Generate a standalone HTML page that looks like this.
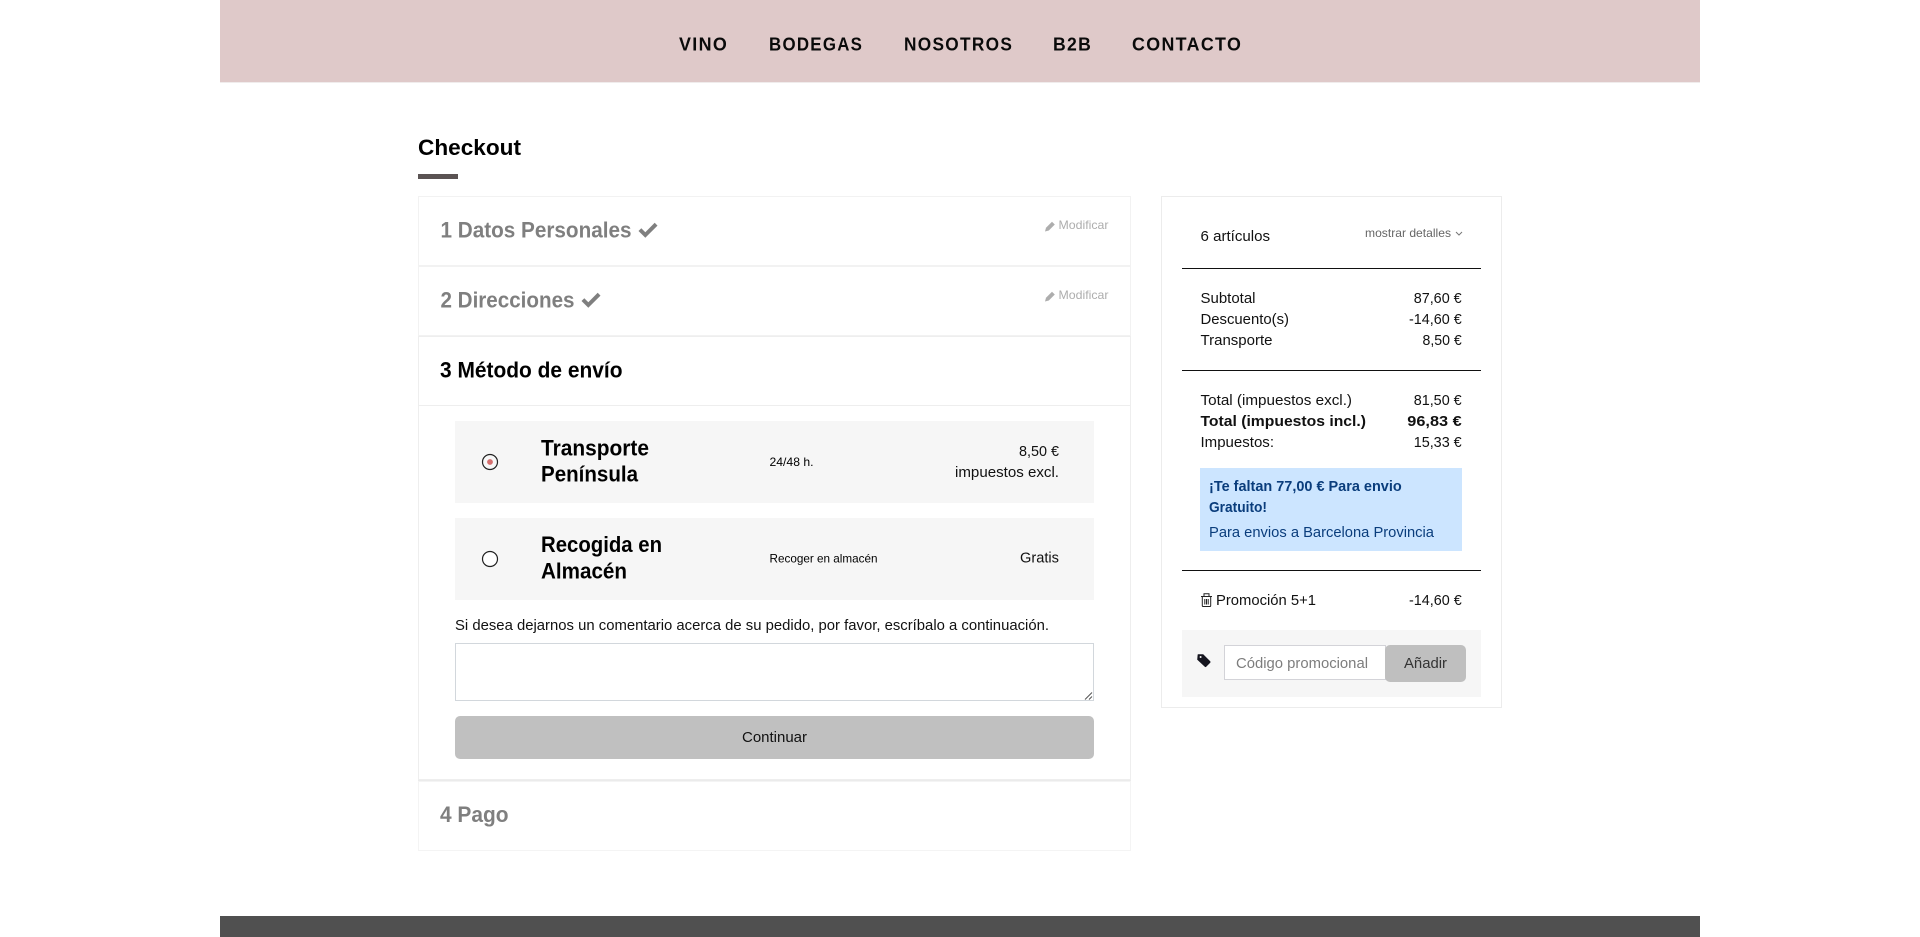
<!DOCTYPE html>
<html lang="es">
<head>
<meta charset="utf-8">
<title>Checkout</title>
<style>
html,body{margin:0;padding:0;background:#fff;width:1920px;height:937px;overflow:hidden}
svg{display:block}
text{font-family:"Liberation Sans",Arial,sans-serif;fill:#000;font-size:15px}
.b{font-weight:700}
.nav{font-size:18.5px;font-weight:700;fill:#0a0a0a;letter-spacing:1.4px}
.h{font-size:22px;font-weight:700}
.g{fill:#7f7f7f}
.m{font-size:12px;fill:#adadad}
.s{font-size:12px}
.t{font-size:15px;fill:#111}
.bl{fill:#0a3d7c;font-size:15px}
</style>
</head>
<body>
<svg width="1920" height="937" viewBox="0 0 1920 937" xmlns="http://www.w3.org/2000/svg">
<!-- header -->
<rect x="220" y="0" width="1480" height="82" fill="#dfc9c9"/>
<rect x="220" y="82" width="1480" height="1" fill="#f0ecec"/>
<text class="nav" x="679" y="50.5" textLength="49.2" lengthAdjust="spacingAndGlyphs">VINO</text>
<text class="nav" x="769" y="50.5" textLength="94.2" lengthAdjust="spacingAndGlyphs">BODEGAS</text>
<text class="nav" x="904" y="50.5" textLength="109.2" lengthAdjust="spacingAndGlyphs">NOSOTROS</text>
<text class="nav" x="1053" y="50.5" textLength="39.2" lengthAdjust="spacingAndGlyphs">B2B</text>
<text class="nav" x="1132" y="50.5" textLength="110.2" lengthAdjust="spacingAndGlyphs">CONTACTO</text>

<!-- title -->
<text class="h" x="418" y="155" textLength="103" lengthAdjust="spacingAndGlyphs">Checkout</text>
<rect x="418" y="174" width="40" height="5" fill="#5a5353"/>

<!-- step boxes -->
<rect x="418.5" y="196.5" width="712" height="69" fill="#fff" stroke="#f2f2f2"/>
<rect x="418.5" y="266.5" width="712" height="69" fill="#fff" stroke="#f2f2f2"/>
<rect x="418.5" y="336.5" width="712" height="443" fill="#fff" stroke="#eeeeee"/>
<rect x="419" y="405" width="711" height="1" fill="#eeeeee"/>
<rect x="418.5" y="781.5" width="712" height="69" fill="#fff" stroke="#f4f4f4"/>
<rect x="418" y="780" width="713" height="1" fill="#ebebeb"/>

<text class="h g" x="440.5" y="237.5" textLength="191" lengthAdjust="spacingAndGlyphs">1 Datos Personales</text>
<path d="M638.5 231l2.8-2.8 4 4 9.4-9.4 2.8 2.8-12.2 12.2z" fill="#7f7f7f"/>
<path d="M1045 231.5l1-3.8 6-6 2.8 2.8-6 6z" fill="#adadad"/>
<text class="m" x="1058.5" y="229" textLength="50" lengthAdjust="spacingAndGlyphs">Modificar</text>

<text class="h g" x="440.5" y="307.5" textLength="134" lengthAdjust="spacingAndGlyphs">2 Direcciones</text>
<path d="M581.5 301l2.8-2.8 4 4 9.4-9.4 2.8 2.8-12.2 12.2z" fill="#7f7f7f"/>
<path d="M1045 301.5l1-3.8 6-6 2.8 2.8-6 6z" fill="#adadad"/>
<text class="m" x="1058.5" y="299" textLength="50" lengthAdjust="spacingAndGlyphs">Modificar</text>

<text class="h" x="440" y="377.5" textLength="182.5" lengthAdjust="spacingAndGlyphs">3 Método de envío</text>

<!-- shipping rows -->
<rect x="455" y="421" width="639" height="82" fill="#f6f6f6"/>
<rect x="455" y="518" width="639" height="82" fill="#f6f6f6"/>
<circle cx="490" cy="462" r="7.5" fill="#f8f8f8" stroke="#222" stroke-width="1.2"/>
<circle cx="490" cy="462" r="2.9" fill="#d66f6f"/>
<circle cx="490" cy="559" r="7.5" fill="#fff" stroke="#222" stroke-width="1.2"/>

<text class="h" x="541" y="455.5" textLength="108" lengthAdjust="spacingAndGlyphs">Transporte</text>
<text class="h" x="541" y="481.5" textLength="97" lengthAdjust="spacingAndGlyphs">Península</text>
<text class="h" x="541" y="552" textLength="121" lengthAdjust="spacingAndGlyphs">Recogida en</text>
<text class="h" x="541" y="578.5" textLength="86" lengthAdjust="spacingAndGlyphs">Almacén</text>
<text class="s" x="769.5" y="466" textLength="44" lengthAdjust="spacingAndGlyphs">24/48 h.</text>
<text class="s" x="769.5" y="562.5" textLength="108" lengthAdjust="spacingAndGlyphs">Recoger en almacén</text>
<text class="t" x="1019" y="456" textLength="40" lengthAdjust="spacingAndGlyphs">8,50 €</text>
<text class="t" x="955" y="477" textLength="104" lengthAdjust="spacingAndGlyphs">impuestos excl.</text>
<text class="t" x="1020" y="562.5" textLength="39" lengthAdjust="spacingAndGlyphs">Gratis</text>

<text class="t" x="455" y="630" textLength="594" lengthAdjust="spacingAndGlyphs">Si desea dejarnos un comentario acerca de su pedido, por favor, escríbalo a continuación.</text>
<rect x="455.5" y="643.5" width="638" height="57" fill="#fff" stroke="#d2d7dc"/>
<path d="M1085 699.5l7-7M1089 699.5l3-3" stroke="#555" stroke-width="1" fill="none"/>
<rect x="455" y="716" width="639" height="43" rx="5" fill="#c0c0c0"/>
<text class="t" x="742" y="742" textLength="65" lengthAdjust="spacingAndGlyphs">Continuar</text>

<text class="h g" x="440" y="822" textLength="68.5" lengthAdjust="spacingAndGlyphs">4 Pago</text>

<!-- summary -->
<rect x="1161.5" y="196.5" width="340" height="511" fill="#fff" stroke="#ececec"/>
<text class="t" x="1200.5" y="241" textLength="69.5" lengthAdjust="spacingAndGlyphs">6 artículos</text>
<text class="s" style="fill:#666" x="1365" y="237" textLength="86" lengthAdjust="spacingAndGlyphs">mostrar detalles</text>
<path d="M1456 232l3 3 3-3" stroke="#777" stroke-width="1" fill="none"/>
<rect x="1182" y="268" width="299" height="1" fill="#111"/>
<text class="t" x="1200.5" y="303" textLength="55" lengthAdjust="spacingAndGlyphs">Subtotal</text>
<text class="t" x="1413.7" y="303" textLength="48" lengthAdjust="spacingAndGlyphs">87,60 €</text>
<text class="t" x="1200.5" y="324" textLength="88.5" lengthAdjust="spacingAndGlyphs">Descuento(s)</text>
<text class="t" x="1409" y="324" textLength="52.7" lengthAdjust="spacingAndGlyphs">-14,60 €</text>
<text class="t" x="1200.5" y="345" textLength="72" lengthAdjust="spacingAndGlyphs">Transporte</text>
<text class="t" x="1422.5" y="345" textLength="39.2" lengthAdjust="spacingAndGlyphs">8,50 €</text>
<rect x="1182" y="370" width="299" height="1" fill="#111"/>
<text class="t" x="1200.5" y="405" textLength="151.5" lengthAdjust="spacingAndGlyphs">Total (impuestos excl.)</text>
<text class="t" x="1413.7" y="405" textLength="48" lengthAdjust="spacingAndGlyphs">81,50 €</text>
<text class="t b" x="1200.5" y="426" textLength="165.5" lengthAdjust="spacingAndGlyphs">Total (impuestos incl.)</text>
<text class="t b" x="1407.3" y="426" textLength="54.4" lengthAdjust="spacingAndGlyphs">96,83 €</text>
<text class="t" x="1200.5" y="447" textLength="73.5" lengthAdjust="spacingAndGlyphs">Impuestos:</text>
<text class="t" x="1413.7" y="447" textLength="48" lengthAdjust="spacingAndGlyphs">15,33 €</text>

<rect x="1200" y="468" width="262" height="83" fill="#cce5ff"/>
<text class="bl b" x="1209" y="491" textLength="192.7" lengthAdjust="spacingAndGlyphs">¡Te faltan 77,00 € Para envio</text>
<text class="bl b" x="1209" y="512" textLength="58" lengthAdjust="spacingAndGlyphs">Gratuito!</text>
<text class="bl" x="1209" y="537" textLength="225" lengthAdjust="spacingAndGlyphs">Para envios a Barcelona Provincia</text>
<rect x="1182" y="570" width="299" height="1" fill="#111"/>

<path d="M1201 596.5h11M1204 596v-2.2h5v2.2M1202.3 597v8.6q0 .9 .9 .9h6.6q.9 0 .9-.9v-8.6M1204.8 599v5.5M1206.5 599v5.5M1208.2 599v5.5" stroke="#222" stroke-width="1" fill="none"/>
<text class="t" x="1216" y="605" textLength="100" lengthAdjust="spacingAndGlyphs">Promoción 5+1</text>
<text class="t" x="1409" y="605" textLength="52.7" lengthAdjust="spacingAndGlyphs">-14,60 €</text>

<rect x="1182" y="630" width="299" height="67" fill="#f6f6f6"/>
<path d="M1198 654.5h5l7 7q.5 .5 0 1l-4 4q-.5 .5-1 0l-7.5-7z" fill="#15151f" stroke="#15151f" stroke-width=".6" stroke-linejoin="round"/>
<circle cx="1200.6" cy="657" r="1" fill="#f6f6f6"/>
<rect x="1224.5" y="645.5" width="161" height="34" fill="#fff" stroke="#d3d3d8"/>
<text class="t" style="fill:#7d7d7d" x="1236" y="668" textLength="132" lengthAdjust="spacingAndGlyphs">Código promocional</text>
<rect x="1385" y="645" width="81" height="37" rx="5" fill="#bfbfbf"/>
<text class="t" style="fill:#333" x="1404" y="668" textLength="43" lengthAdjust="spacingAndGlyphs">Añadir</text>

<!-- footer -->
<rect x="220" y="916" width="1480" height="21" fill="#505050"/>
</svg>
</body>
</html>
